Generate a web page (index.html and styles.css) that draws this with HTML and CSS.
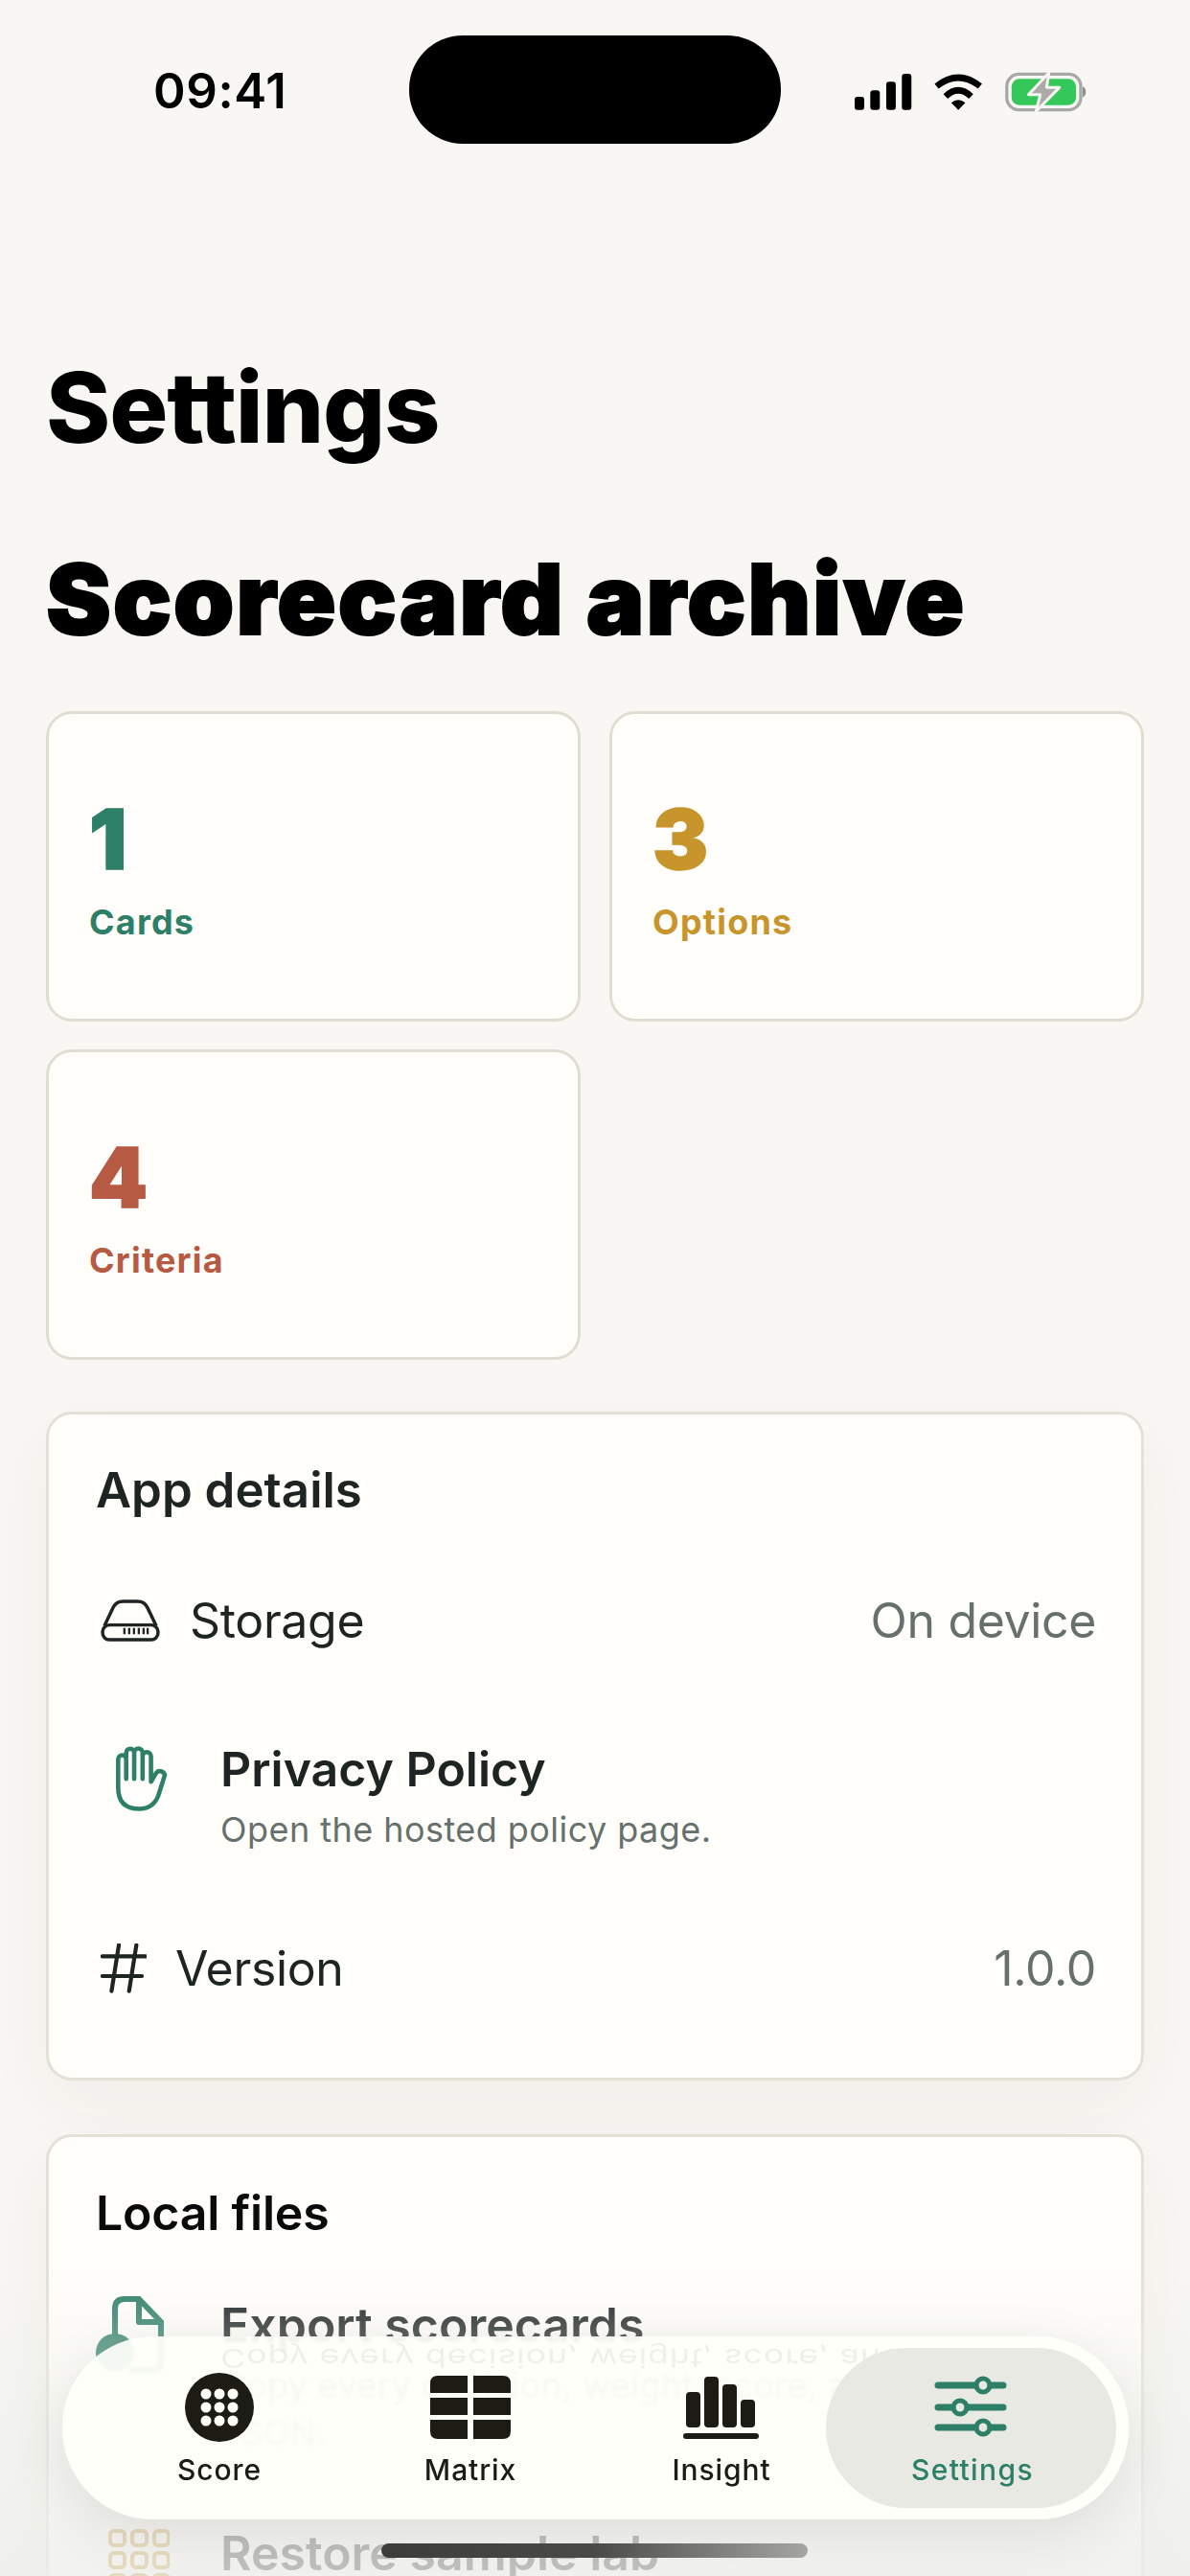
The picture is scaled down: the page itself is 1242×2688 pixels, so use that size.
FILE: index.html
```html
<!DOCTYPE html>
<html lang="en">
<head>
<meta charset="utf-8">
<title>Settings</title>
<link rel="stylesheet" href="styles.css">
</head>
<body>
<div class="screen">
  <header class="status">
    <span class="clock">09:41</span>
    <svg class="status-icons" viewBox="150 60 730 135" width="243" height="45">
      <rect x="153" y="147" width="30" height="41" rx="9"/>
      <rect x="202" y="127" width="30" height="61" rx="9"/>
      <rect x="252" y="100" width="30" height="88" rx="9"/>
      <rect x="301" y="75" width="30" height="113" rx="9"/>
      <path d="M410 114Q478 60 546 114M438 146Q478 108 518 146" fill="none" stroke="#000" stroke-width="20"/>
      <path d="M478 188L456 166Q478 148 500 166Z"/>
      <rect x="630" y="76" width="232" height="112" rx="38" fill="none" stroke="#a8a8a6" stroke-width="10"/>
      <rect x="645" y="91" width="202" height="82" rx="24" fill="#34c759"/>
      <path d="M868 115q10 6 10 17t-10 17z" fill="#8e8e8c"/>
      <path d="M762 72L698 140H735L722 192L795 118H755Z" fill="#aaaaa8" stroke="#f8f7f3" stroke-width="9" stroke-linejoin="round"/>
    </svg>
  </header>
  <div class="island"></div>

  <main class="content">
    <h1 class="page-title">Settings</h1>
    <h2 class="archive-title">Scorecard archive</h2>

    <section class="stats">
      <div class="stat stat-green"><div class="stat-num">1</div><div class="stat-label">Cards</div></div>
      <div class="stat stat-gold"><div class="stat-num">3</div><div class="stat-label">Options</div></div>
      <div class="stat stat-red"><div class="stat-num">4</div><div class="stat-label">Criteria</div></div>
    </section>

    <section class="panel panel-details">
      <h3 class="panel-title">App details</h3>
      <div class="info-row info-storage">
        <svg class="ico-storage" viewBox="115 436 166 124" width="64" height="48">
          <path d="M128 512L152 462Q160 446 178 446H218Q236 446 244 462L268 512" fill="none" stroke="#1d2422" stroke-width="9"/>
          <rect x="123" y="510" width="150" height="40" rx="18" fill="none" stroke="#1d2422" stroke-width="9"/>
          <path d="M182 518v17M195 518v17M208 518v17M221 518v17M234 518v17M245 518v17" stroke="#1d2422" stroke-width="6"/>
        </svg>
        <span class="info-label">Storage</span>
        <span class="info-value">On device</span>
      </div>
      <div class="link-row link-privacy">
        <svg class="ico-hand" viewBox="150 826 155 196" width="59" height="75">
          <path d="M164 950V872a11 11 0 0 1 22 0v54M186 866v-12a11 11 0 0 1 22 0v72M208 854a11 11 0 0 1 23 0v72M231 864a11 11 0 0 1 23 0v70l14-24q5-7 13-5t11 10L274 972Q260 1008 222 1008Q164 1008 164 950" fill="none" stroke="#2d7f68" stroke-width="12" stroke-linecap="round" stroke-linejoin="round"/>
        </svg>
        <div class="link-text">
          <div class="link-title">Privacy Policy</div>
          <div class="link-sub">Open the hosted policy page.</div>
        </div>
      </div>
      <div class="info-row info-version">
        <svg class="ico-hash" viewBox="115 1382 126 136" width="48" height="52">
          <path d="M165 1386L145 1512M213 1386L193 1512M120 1417H238M120 1471H228" fill="none" stroke="#1d2422" stroke-width="11" stroke-linecap="round"/>
        </svg>
        <span class="info-label">Version</span>
        <span class="info-value">1.0.0</span>
      </div>
    </section>

    <section class="panel panel-files">
      <h3 class="panel-title panel-title-dark">Local files</h3>
      <div class="link-row link-export">
        <svg class="ico-doc" viewBox="0 0 72 90" width="72" height="90">
          <path d="M20 42V14Q20 4 30 4H45L68 28V70Q68 78 60 78H34" fill="none" stroke="#2d7f68" stroke-width="6"/>
          <path d="M45 4V28H68" fill="none" stroke="#2d7f68" stroke-width="6" stroke-linejoin="round"/>
          <circle cx="20" cy="60" r="20" fill="#2d7f68"/>
        </svg>
        <div class="link-text">
          <div class="link-title">Export scorecards</div>
          <div class="link-sub link-sub-wrap">Copy every decision, weight, score, and note as JSON.</div>
        </div>
      </div>
      <div class="link-row link-restore">
        <svg class="ico-grid" viewBox="0 0 64 64" width="64" height="64">
          <g fill="none" stroke="#c9952e" stroke-width="4">
            <rect x="2" y="2" width="15" height="15" rx="4"/><rect x="25" y="2" width="15" height="15" rx="4"/><rect x="48" y="2" width="15" height="15" rx="4"/>
            <rect x="2" y="25" width="15" height="15" rx="4"/><rect x="25" y="25" width="15" height="15" rx="4"/><rect x="48" y="25" width="15" height="15" rx="4"/>
            <rect x="2" y="48" width="15" height="15" rx="4"/><rect x="25" y="48" width="15" height="15" rx="4"/><rect x="48" y="48" width="15" height="15" rx="4"/>
          </g>
        </svg>
        <div class="link-text"><div class="link-title">Restore sample lab</div></div>
      </div>
    </section>
  </main>

  <div class="scrim"></div>

  <nav class="tabbar">
    <div class="mirror">Copy every decision, weight, score, and note</div>
    <div class="tab-pill"></div>
    <div class="tab">
      <svg viewBox="0 -4 72 72" width="72" height="72" class="tab-ico">
        <circle cx="36" cy="36" r="36" fill="#1c1c14"/>
        <g fill="#fffffa">
          <circle cx="22" cy="22" r="5.5"/><circle cx="36" cy="22" r="5.5"/><circle cx="50" cy="22" r="5.5"/>
          <circle cx="22" cy="36" r="5.5"/><circle cx="36" cy="36" r="5.5"/><circle cx="50" cy="36" r="5.5"/>
          <circle cx="22" cy="50" r="5.5"/><circle cx="36" cy="50" r="5.5"/><circle cx="50" cy="50" r="5.5"/>
        </g>
      </svg>
      <span class="tab-label">Score</span>
    </div>
    <div class="tab">
      <svg viewBox="0 -7 84 72" width="84" height="72" class="tab-ico">
        <path d="M8 0H39V18H0V8Q0 0 8 0ZM45 0H76Q84 0 84 8V18H45ZM0 23H39V41H0ZM45 23H84V41H45ZM0 46H39V66H8Q0 66 0 58ZM45 46H84V58Q84 66 76 66H45Z" fill="#1c1c14"/>
      </svg>
      <span class="tab-label">Matrix</span>
    </div>
    <div class="tab">
      <svg viewBox="0 0 80 72" width="80" height="72" class="tab-ico">
        <rect x="3" y="24" width="15" height="37" rx="4" fill="#1c1c14"/>
        <rect x="22" y="8" width="15" height="53" rx="4" fill="#1c1c14"/>
        <rect x="41" y="16" width="15" height="45" rx="4" fill="#1c1c14"/>
        <rect x="60" y="32" width="15" height="29" rx="4" fill="#1c1c14"/>
        <rect x="0" y="67" width="79" height="6" rx="3" fill="#1c1c14"/>
      </svg>
      <span class="tab-label">Insight</span>
    </div>
    <div class="tab tab-active">
      <svg viewBox="2 0 72 72" width="72" height="72" class="tab-ico">
        <path d="M2 17H41M57 17H70M2 40H17M33 40H70M2 61H41M57 61H70" stroke="#2d7f68" stroke-width="7" stroke-linecap="round"/>
        <g fill="none" stroke="#2d7f68" stroke-width="5">
          <circle cx="49" cy="17" r="7"/><circle cx="25" cy="40" r="7"/><circle cx="49" cy="61" r="7"/>
        </g>
      </svg>
      <span class="tab-label">Settings</span>
    </div>
  </nav>
  <div class="home-bar"></div>
</div>
</body>
</html>
```
FILE: styles.css
```css
* { box-sizing: border-box; margin: 0; padding: 0; }
html, body { width: 1242px; height: 2688px; overflow: hidden; }
body { font-family: Inter, "Liberation Sans", sans-serif; background: #f8f7f3; color: #1d2422; }
.screen { position: relative; width: 1242px; height: 2688px; overflow: hidden; background: #f8f7f3; }

.status { display: flex; justify-content: space-between; height: 364px; padding: 0 108px 0 160px; align-items: flex-start; }
.clock { margin-top: 64px; font-size: 51px; line-height: 62px; font-weight: 600; letter-spacing: 0.6px; color: #000; }
.status-icons { margin-top: 72px; }
.island { position: absolute; left: 427px; top: 37px; width: 388px; height: 113px; border-radius: 56px; background: #000; }
.tab-ico { overflow: visible; }

.content { padding: 0 48px; }
.page-title { font-size: 102px; line-height: 122px; font-weight: 800; color: #000; letter-spacing: -1.2px; }
.archive-title { margin-top: 78px; font-size: 102px; line-height: 122px; font-weight: 900; color: #000; letter-spacing: 1.7px; -webkit-text-stroke: 2px #000; }

.stats { margin-top: 56px; display: grid; grid-template-columns: 558px 558px; gap: 29px 30px; }
.stat { height: 324px; padding: 81px 42px 0; background: #fffefa; border: 3px solid #e0ddd2; border-radius: 27px; }
.stat-num { font-size: 87px; line-height: 100px; font-weight: 900; -webkit-text-stroke: 1.5px currentColor; }
.stat-label { margin-top: 13px; font-size: 36px; line-height: 46px; font-weight: 700; letter-spacing: 1.2px; }
.stat-green { color: #2d7f68; }
.stat-gold { color: #c8952c; }
.stat-red { color: #b75a44; }

.panel { background: #fffefa; border: 3px solid #e2e0d7; border-radius: 27px; box-shadow: 0 24px 70px rgba(60,60,40,.05); padding: 48px 49px 64px; }
.panel-details { margin-top: 54px; height: 698px; }
.panel-files { margin-top: 56px; height: 700px; }
.panel-title { font-size: 51px; line-height: 62px; font-weight: 600; color: #1d2422; }
.panel-title-dark { color: #0a0a0a; font-size: 50px; letter-spacing: -0.2px; }

.info-row { display: flex; align-items: center; height: 100px; font-size: 50px; letter-spacing: -0.35px; color: #1d2422; }
.info-storage { margin-top: 55px; }
.info-version { margin-top: 72px; }
.info-label { flex: 1; }
.info-storage .info-label { margin-left: 30px; }
.info-version .info-label { margin-left: 30px; }
.ico-storage { margin-left: 4px; }
.ico-hash { margin-left: 5px; }
.info-value { font-size: 50px; color: #66706c; margin-right: -2px; }

.link-row { display: flex; align-items: flex-start; }
.link-privacy { margin-top: 74px; }
.ico-hand { margin: 3px 0 0 18px; flex: none; }
.link-privacy .link-text { margin-left: 53px; }
.link-title { font-size: 50px; line-height: 62px; font-weight: 600; color: #1d2422; }
.link-sub { margin-top: 9px; font-size: 36px; line-height: 46px; letter-spacing: 0.45px; color: #66706c; }
.link-export { margin-top: 55px; }
.ico-doc { flex: none; }
.link-export .link-text { margin-left: 58px; width: 860px; }
.link-sub-wrap { margin-top: 8px; line-height: 49px; }
.link-restore { margin-top: 70px; }
.ico-grid { margin: 6px 0 0 13px; flex: none; }
.link-restore .link-text { margin-left: 53px; }

.scrim { position: absolute; left: 0; right: 0; top: 2370px; bottom: 0; background: linear-gradient(to bottom, rgba(246,246,242,0), rgba(240,240,236,.3) 22%, rgba(240,240,236,.72) 70%, rgba(238,238,234,.78)); }

.tabbar { position: absolute; left: 65px; top: 2438px; width: 1113px; height: 191px; border-radius: 95px; background: rgba(255,255,250,.92); backdrop-filter: blur(1.5px); box-shadow: 0 16px 60px rgba(0,0,0,.09); display: grid; grid-template-columns: repeat(4, 262px); padding: 34px 0 0 33px; overflow: hidden; }
.mirror { position: absolute; left: 165px; top: 8px; font-size: 36px; line-height: 30px; letter-spacing: 0.8px; color: #66706c; opacity: .1; transform: scaleY(-0.75); white-space: nowrap; }
.tab-pill { position: absolute; left: 797px; top: 12px; width: 303px; height: 167px; border-radius: 84px; background: #e9e9e4; }
.tab { position: relative; display: flex; flex-direction: column; align-items: center; gap: 14px; }
.tab-ico { display: block; height: 72px; }
.tab-label { font-size: 30px; line-height: 38px; font-weight: 500; letter-spacing: 0.9px; color: #1c1c14; }
.tab-active .tab-label { color: #2d7f68; letter-spacing: 1.4px; }

.home-bar { position: absolute; left: 398px; top: 2654px; width: 445px; height: 15px; border-radius: 8px; background: linear-gradient(to right, #3d3d3b, #4a4a48 50%, #a5a5a2); }
```
